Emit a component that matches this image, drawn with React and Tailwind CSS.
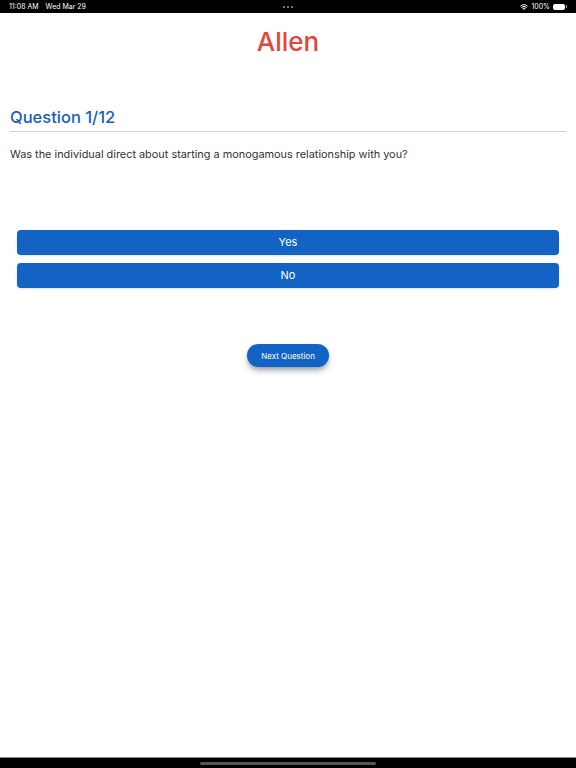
import { Wifi } from "lucide-react";

function StatusBar() {
  return (
    <div className="h-[13px] bg-black text-white flex items-center justify-between px-[9px] text-[7px] leading-none">
      <div className="flex gap-[7px] w-[120px]">
        <span>11:08 AM</span>
        <span>Wed Mar 29</span>
      </div>
      <div className="flex gap-[2px]">
        <span className="w-[2px] h-[2px] rounded-full bg-gray-400"></span>
        <span className="w-[2px] h-[2px] rounded-full bg-gray-400"></span>
        <span className="w-[2px] h-[2px] rounded-full bg-gray-400"></span>
      </div>
      <div className="flex items-center justify-end gap-[3px] w-[120px]">
        <Wifi size={8} strokeWidth={3} />
        <span>100%</span>
        <div className="flex items-center">
          <div className="w-[12px] h-[6px] rounded-[2px] bg-white"></div>
          <div className="w-[1px] h-[3px] bg-gray-400 ml-[1px]"></div>
        </div>
      </div>
    </div>
  );
}

export default function App() {
  const answers = ["Yes", "No"];
  return (
    <div
      className="w-[576px] h-[768px] bg-white flex flex-col"
      style={{ fontFamily: "Inter, 'Noto Sans', sans-serif" }}
    >
      <StatusBar />
      <div className="flex-1 flex flex-col">
        <h1 className="text-center text-[26px] font-medium text-[#e2463c] mt-[13px] leading-[32px]">
          Allen
        </h1>
        <div className="px-[10px] mt-[47px]">
          <h2 className="text-[16.5px] font-medium text-[#1a5fb4] leading-[24px]">
            Question 1/12
          </h2>
          <div className="h-px bg-[#cfd2d6] mt-[2px]"></div>
          <p className="text-[10.9px] text-[#333] mt-[14px] leading-[16px]">
            Was the individual direct about starting a monogamous relationship
            with you?
          </p>
        </div>
        <div className="px-[17px] mt-[68px] flex flex-col gap-[8px]">
          {answers.map((a) => (
            <button
              key={a}
              className="h-[25px] w-full rounded-[4px] bg-[#1263c4] text-white text-[11px] shadow-sm"
            >
              {a}
            </button>
          ))}
        </div>
        <div className="flex justify-center mt-[56px]">
          <button className="w-[82px] h-[23px] rounded-full bg-[#1263c4] text-white text-[8px] shadow-md shadow-gray-400">
            Next Question
          </button>
        </div>
      </div>
      <div className="h-[11px] bg-black border-t border-[#888] flex items-center justify-center">
        <div className="w-[176px] h-[3px] rounded-full bg-[#555]"></div>
      </div>
    </div>
  );
}
